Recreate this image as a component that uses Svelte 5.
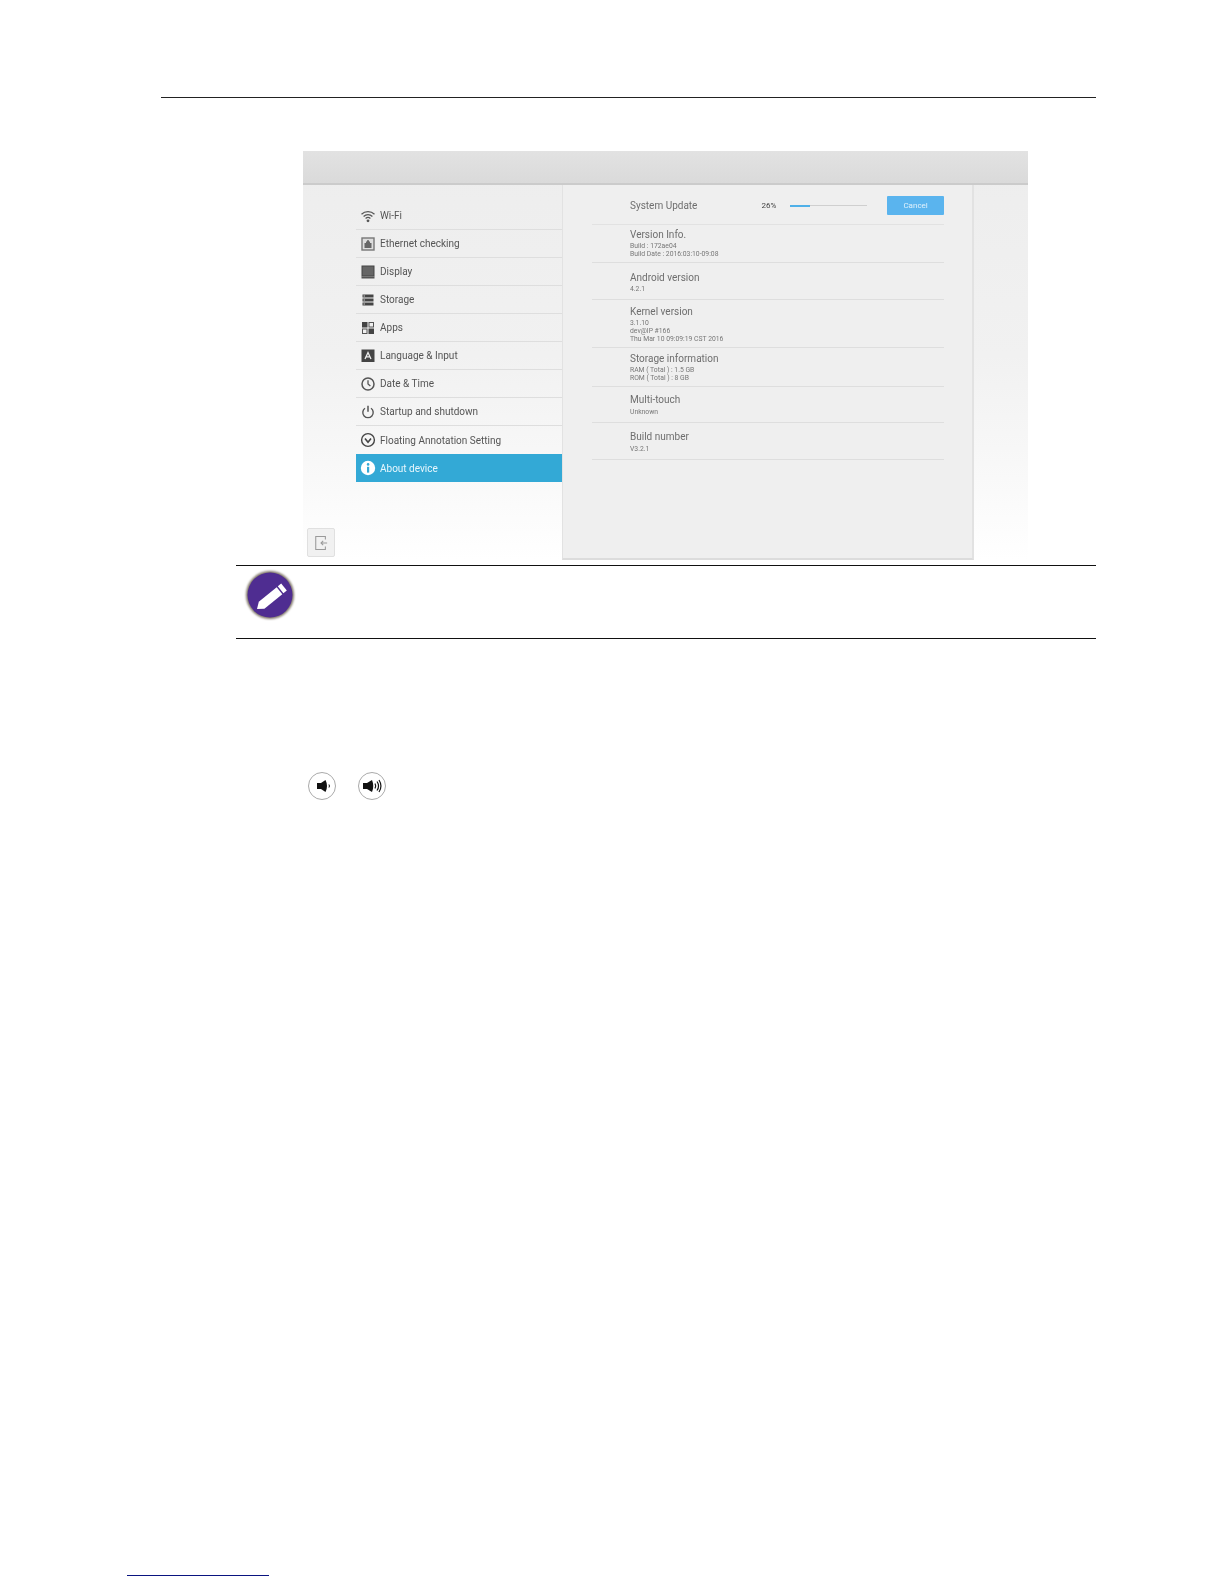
<script>
  const menu = [
    { id: 'wifi', label: 'Wi-Fi' },
    { id: 'ethernet', label: 'Ethernet checking' },
    { id: 'display', label: 'Display' },
    { id: 'storage', label: 'Storage' },
    { id: 'apps', label: 'Apps' },
    { id: 'language', label: 'Language & Input' },
    { id: 'clock', label: 'Date & Time' },
    { id: 'power', label: 'Startup and shutdown' },
    { id: 'floating', label: 'Floating Annotation Setting' },
    { id: 'info', label: 'About device', active: true }
  ];

  const about = [
    { title: 'Version Info.', lines: ['Build : 172ae04', 'Build Date : 2016:03:10-09:08'], h: 38, pad: 3, gap: 1 },
    { title: 'Android version', lines: ['4.2.1'], h: 37, pad: 8, gap: 1 },
    { title: 'Kernel version', lines: ['3.1.10', 'dev@IP #166', 'Thu Mar 10 09:09:19 CST 2016'], h: 48, pad: 5, gap: 1 },
    { title: 'Storage information', lines: ['RAM ( Total ) : 1.5 GB', 'ROM ( Total ) : 8 GB'], h: 39, pad: 4, gap: 1 },
    { title: 'Multi-touch', lines: ['Unknown'], h: 36, pad: 6, gap: 2 },
    { title: 'Build number', lines: ['V3.2.1'], h: 37, pad: 7, gap: 2 }
  ];
</script>

{#snippet icon(id)}
  <svg class="ico" viewBox="0 0 16 16" width="16" height="16">
    {#if id === 'wifi'}
      <g fill="none" stroke="#555" stroke-width="1.3">
        <path d="M1.5 6.2a9.5 9.5 0 0 1 13 0" />
        <path d="M3.6 8.4a6.5 6.5 0 0 1 8.8 0" />
        <path d="M5.6 10.4a3.6 3.6 0 0 1 4.8 0" />
      </g>
      <circle cx="8" cy="12.8" r="1.4" fill="#555" />
    {:else if id === 'ethernet'}
      <rect x="2" y="2" width="12" height="12" fill="#ddd" stroke="#777" stroke-width="1.4" />
      <path d="M4.500 12V7h1.500V5.500h1V4.200h2v1.300h1V7h1.500v5z" fill="#666" />
    {:else if id === 'display'}
      <rect x="2" y="2" width="12" height="10" fill="#666" stroke="#444" />
      <rect x="1.500" y="12.500" width="13" height="2" fill="#555" />
    {:else if id === 'storage'}
      <g fill="#444">
        <rect x="2.500" y="2.500" width="11" height="3" />
        <rect x="2.500" y="6.500" width="11" height="3" />
        <rect x="2.500" y="10.500" width="11" height="3" />
      </g>
      <g fill="#ccc">
        <rect x="3.500" y="3.500" width="1.500" height="1" />
        <rect x="3.500" y="7.500" width="1.500" height="1" />
        <rect x="3.500" y="11.500" width="1.500" height="1" />
      </g>
    {:else if id === 'apps'}
      <rect x="2" y="2" width="5.500" height="5.500" fill="#444" />
      <rect x="9" y="2.500" width="4.500" height="4.500" fill="none" stroke="#555" />
      <rect x="2.500" y="9" width="4.500" height="4.500" fill="none" stroke="#555" />
      <rect x="8.500" y="8.500" width="5.500" height="5.500" fill="#444" />
    {:else if id === 'language'}
      <rect x="1.500" y="1.500" width="13" height="12.500" fill="#444" />
      <path d="M5 11 8 4.500l3 6.500M6.100 8.900h3.800" fill="none" stroke="#eee" stroke-width="1.300" />
    {:else if id === 'clock'}
      <circle cx="8" cy="8" r="6" fill="none" stroke="#555" stroke-width="1.500" />
      <path d="M8 4.200V8l2.400 2" fill="none" stroke="#555" stroke-width="1.300" />
    {:else if id === 'power'}
      <path d="M5 4.200a5.200 5.200 0 1 0 6 0" fill="none" stroke="#555" stroke-width="1.400" />
      <path d="M8 1.800v6" stroke="#555" stroke-width="1.500" />
    {:else if id === 'floating'}
      <circle cx="8" cy="8" r="6.400" fill="none" stroke="#444" stroke-width="1.400" />
      <path d="M5 6.500 8 10.300l3-3.800" fill="none" stroke="#444" stroke-width="1.600" />
    {:else if id === 'info'}
      <circle cx="8" cy="8" r="7.200" fill="#fff" />
      <rect x="7" y="6.800" width="2.200" height="5.800" fill="#33a9d6" />
      <circle cx="8.100" cy="4.400" r="1.300" fill="#33a9d6" />
    {/if}
  </svg>
{/snippet}

<div class="page">
  <div class="head-rule"></div>

  <div class="screen">
    <div class="topbar"></div>
    <div class="content">
      <div class="side">
        <ul class="menu">
          {#each menu as item}
            <li class:active={item.active}>
              {@render icon(item.id)}
              <span>{item.label}</span>
            </li>
          {/each}
        </ul>
        <div class="exit">
          <svg viewBox="0 0 16 18" width="14" height="16">
            <path d="M13 5V1.500H2v15h11V13" fill="none" stroke="#999" stroke-width="1.200" />
            <path d="M15 9H8M10.500 6.500 8 9l2.500 2.500" fill="none" stroke="#999" stroke-width="1.200" />
          </svg>
        </div>
      </div>

      <div class="panel">
        <div class="update">
          <span class="update-title">System Update</span>
          <span class="pct">26%</span>
          <div class="progress"><div class="fill" style="width: 26%"></div></div>
          <button class="cancel">Cancel</button>
        </div>
        {#each about as row}
          <div class="row" style="height: {row.h}px; padding-top: {row.pad}px">
            <div class="title" style="margin-bottom: {row.gap}px">{row.title}</div>
            {#each row.lines as line}
              <div class="line">{line}</div>
            {/each}
          </div>
        {/each}
      </div>
    </div>
  </div>

  <div class="note">
    <svg class="pencil" viewBox="0 0 52 52" width="52" height="52">
      <circle class="halo" cx="26" cy="26" r="24" fill="#7d7466" />
      <circle cx="26" cy="26" r="22.500" fill="#4f2d91" />
      <path d="M13 40 14.800 32.700 32.700 18.200 38.300 25.200 20.400 39.700z" fill="#fff" />
      <path d="M33.800 17.300 37.200 14.500 42.800 21.500 39.400 24.300z" fill="#fff" />
    </svg>
  </div>

  <div class="volume">
    <div class="vol-btn">
      <svg viewBox="0 0 28 28" width="28" height="28">
        <rect x="9" y="11" width="4" height="6" fill="#111" />
        <path d="M13 11 17.500 8Q20.500 14 17.500 20L13 17z" fill="#111" />
        <path d="M21 12.500a3 3 0 0 1 0 3" fill="none" stroke="#111" stroke-width="1" />
      </svg>
    </div>
    <div class="vol-btn">
      <svg viewBox="0 0 28 28" width="28" height="28">
        <rect x="5" y="11" width="4" height="6" fill="#111" />
        <path d="M9 11 14 8Q16.500 14 14 20L9 17z" fill="#111" />
        <g fill="none" stroke="#111" stroke-width="1.200">
          <path d="M17 11.500a5 5 0 0 1 0 5" />
          <path d="M19 9.500a8 8 0 0 1 0 9" />
          <path d="M21 8a11 11 0 0 1 0 12" />
        </g>
      </svg>
    </div>
  </div>

  <div class="foot-link"></div>
</div>

<style>
  :global(body) {
    background: #fff;
  }

  .page {
    height: 1584px;
    display: flex;
    flex-direction: column;
    font-family: Roboto, "Liberation Sans", sans-serif;
    overflow: hidden;
  }

  .head-rule {
    margin: 97px 128px 0 161px;
    border-top: 1px solid #222;
  }

  .screen {
    margin: 53px 0 0 303px;
    width: 725px;
    height: 409px;
    display: flex;
    flex-direction: column;
    background: linear-gradient(#ededed 0%, #f1f1f1 50%, #f9f9f9 80%, #fff 100%);
  }

  .topbar {
    height: 32px;
    flex: none;
    background: linear-gradient(#e2e2e2, #dadada);
    border-bottom: 2px solid #cbcbcb;
  }

  .content {
    flex: 1;
    display: flex;
    min-height: 0;
  }

  .side {
    width: 259px;
    flex: none;
    padding-top: 17px;
    box-sizing: border-box;
    display: flex;
    flex-direction: column;
    justify-content: space-between;
  }

  .menu {
    list-style: none;
    margin: 0 0 0 53px;
    padding: 0;
  }

  .menu li {
    height: 28px;
    box-sizing: border-box;
    display: flex;
    align-items: center;
    padding-left: 4px;
    border-bottom: 1px solid #dedede;
    font-size: 10px;
    color: #555;
    filter: blur(0.3px);
  }

  .menu li:nth-child(9) {
    border-bottom: 0;
  }

  .menu li.active {
    background: #33a9d6;
    color: #e8f7fd;
    border-bottom: 0;
  }

  .ico {
    flex: none;
    margin-right: 4px;
  }

  .exit {
    width: 26px;
    height: 27px;
    margin: 0 0 3px 4px;
    border: 1px solid #e0e0e0;
    border-radius: 2px;
    background: #f1f1f1;
    display: flex;
    align-items: center;
    justify-content: center;
  }

  .panel {
    width: 412px;
    height: 375px;
    box-sizing: border-box;
    background: #efefef;
    border-right: 2px solid #e2e2e2;
    border-bottom: 2px solid #dcdcdc;
    border-left: 1px solid #e2e2e2;
    padding: 0 28px 0 29px;
    color: #6e6e6e;
  }

  .update {
    height: 40px;
    box-sizing: border-box;
    display: flex;
    align-items: center;
    padding: 2px 0 0 38px;
    border-bottom: 1px solid #e2e2e2;
    filter: blur(0.3px);
  }

  .update-title {
    width: 132px;
    font-size: 10px;
  }

  .pct {
    width: 29px;
    font-size: 8px;
    color: #444;
  }

  .progress {
    width: 77px;
    height: 1px;
    background: #cfcfcf;
    margin-right: 20px;
  }

  .fill {
    height: 2px;
    background: #4fb0e8;
  }

  .cancel {
    width: 57px;
    height: 19px;
    padding: 0;
    border: 0;
    border-radius: 1px;
    background: #5ab4ee;
    color: #dff1fc;
    font: 8px Roboto, sans-serif;
  }

  .row {
    box-sizing: border-box;
    padding-left: 38px;
    border-bottom: 1px solid #dedede;
    filter: blur(0.3px);
  }

  .title {
    font-size: 10px;
    line-height: 13px;
  }

  .line {
    font-size: 6.800px;
    line-height: 8px;
    color: #777;
  }

  .note {
    margin: 5px 0 0 236px;
    width: 860px;
    height: 72px;
    border-top: 1px solid #111;
    border-bottom: 1px solid #111;
    display: flex;
    align-items: center;
  }

  .pencil {
    margin: -14px 0 0 8px;
  }

  .halo {
    filter: blur(1px);
  }

  .volume {
    margin: 133px 0 0 308px;
    display: flex;
    gap: 22px;
  }

  .vol-btn {
    width: 28px;
    height: 28px;
    border: 1px solid #aaa;
    border-radius: 50%;
    box-sizing: border-box;
    display: flex;
    align-items: center;
    justify-content: center;
  }

  .vol-btn svg {
    flex: none;
  }

  .foot-link {
    margin: auto 0 8px 127px;
    width: 142px;
    border-top: 1px solid #0a1480;
  }
</style>
